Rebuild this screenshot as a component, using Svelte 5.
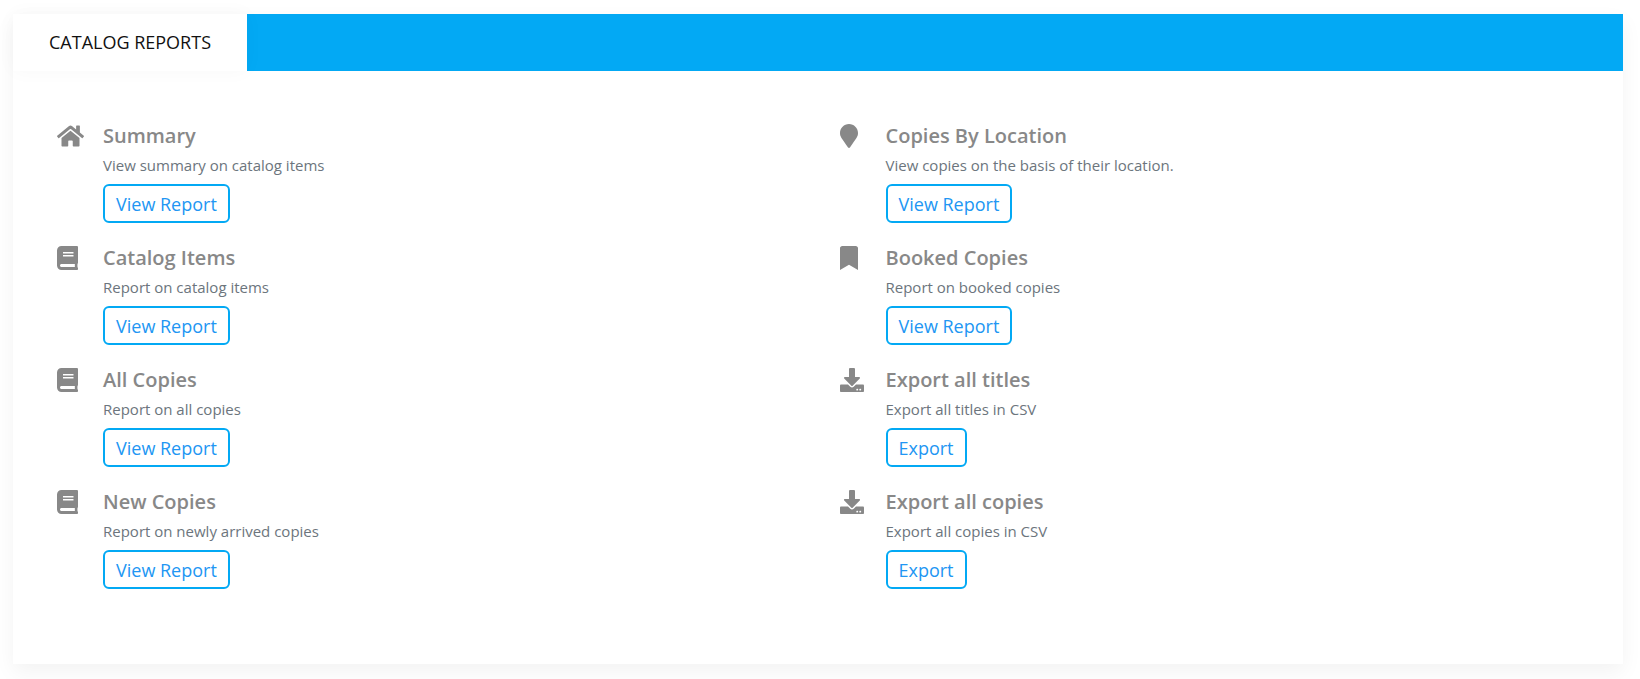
<script>
  const icons = {
    home: { width: 27, box: '0 0 576 512', path: 'M280.37 148.26L96 300.11V464a16 16 0 0 0 16 16l112.06-.29a16 16 0 0 0 15.92-16V368a16 16 0 0 1 16-16h64a16 16 0 0 1 16 16v95.64a16 16 0 0 0 16 16.05L464 480a16 16 0 0 0 16-16V300L295.67 148.26a12.19 12.19 0 0 0-15.3 0zM571.6 251.47L488 182.56V44.05a12 12 0 0 0-12-12h-56a12 12 0 0 0-12 12v72.61L318.47 43a48 48 0 0 0-61 0L4.34 251.47a12 12 0 0 0-1.6 16.9l25.5 31A12 12 0 0 0 45.15 301l235.22-193.74a12.19 12.19 0 0 1 15.3 0L530.9 301a12 12 0 0 0 16.9-1.6l25.5-31a12 12 0 0 0-1.7-16.93z' },
    book: { width: 21, box: '0 0 448 512', path: 'M448 360V24c0-13.3-10.7-24-24-24H96C43 0 0 43 0 96v320c0 53 43 96 96 96h328c13.3 0 24-10.7 24-24v-16c0-7.5-3.5-14.3-8.9-18.7-4.2-15.4-4.2-59.3 0-74.7 5.4-4.3 8.9-11.1 8.9-18.6zM128 134c0-3.3 2.7-6 6-6h212c3.3 0 6 2.7 6 6v20c0 3.3-2.7 6-6 6H134c-3.3 0-6-2.7-6-6v-20zm0 64c0-3.3 2.7-6 6-6h212c3.3 0 6 2.7 6 6v20c0 3.3-2.7 6-6 6H134c-3.3 0-6-2.7-6-6v-20zm253.4 250H96c-17.7 0-32-14.3-32-32 0-17.6 14.4-32 32-32h285.4c-1.9 17.1-1.9 46.9 0 64z' },
    marker: { width: 18, box: '0 0 384 512', path: 'M172.268 501.67C26.97 291.031 0 269.413 0 192 0 85.961 85.961 0 192 0s192 85.961 192 192c0 77.413-26.97 99.031-172.268 309.67-9.535 13.774-29.93 13.773-39.464 0z' },
    bookmark: { width: 18, box: '0 0 384 512', path: 'M0 512V48C0 21.49 21.49 0 48 0h288c26.51 0 48 21.49 48 48v464L192 400 0 512z' },
    download: { width: 24, box: '0 0 512 512', path: 'M216 0h80c13.3 0 24 10.7 24 24v168h87.7c17.8 0 26.7 21.5 14.1 34.1L269.7 378.3c-7.5 7.5-19.8 7.5-27.3 0L90.1 226.1c-12.6-12.6-3.7-34.1 14.1-34.1H192V24c0-13.3 10.7-24 24-24zm296 376v112c0 13.3-10.7 24-24 24H24c-13.3 0-24-10.7-24-24V376c0-13.3 10.7-24 24-24h146.7l49 49c20.1 20.1 52.5 20.1 72.6 0l49-49H488c13.3 0 24 10.7 24 24zm-124 88c0-11-9-20-20-20s-20 9-20 20 9 20 20 20 20-9 20-20zm64 0c0-11-9-20-20-20s-20 9-20 20 9 20 20 20 20-9 20-20z' }
  };

  const columns = [
    [
      { icon: 'home', title: 'Summary', text: 'View summary on catalog items', action: 'View Report' },
      { icon: 'book', title: 'Catalog Items', text: 'Report on catalog items', action: 'View Report' },
      { icon: 'book', title: 'All Copies', text: 'Report on all copies', action: 'View Report' },
      { icon: 'book', title: 'New Copies', text: 'Report on newly arrived copies', action: 'View Report' }
    ],
    [
      { icon: 'marker', title: 'Copies By Location', text: 'View copies on the basis of their location.', action: 'View Report' },
      { icon: 'bookmark', title: 'Booked Copies', text: 'Report on booked copies', action: 'View Report' },
      { icon: 'download', title: 'Export all titles', text: 'Export all titles in CSV', action: 'Export' },
      { icon: 'download', title: 'Export all copies', text: 'Export all copies in CSV', action: 'Export' }
    ]
  ];
</script>

<main class="card">
  <nav class="tabs">
    <button class="tab" type="button">CATALOG REPORTS</button>
  </nav>
  <div class="reports">
    {#each columns as column}
      <div class="column">
        {#each column as report}
          <section class="report">
            <div class="icon">
              <svg width={icons[report.icon].width} height="24" viewBox={icons[report.icon].box} aria-hidden="true">
                <path fill="currentColor" d={icons[report.icon].path} />
              </svg>
            </div>
            <div class="details">
              <h2>{report.title}</h2>
              <p>{report.text}</p>
              <button class="action" type="button">{report.action}</button>
            </div>
          </section>
        {/each}
      </div>
    {/each}
  </div>
</main>

<style>
  :global(body) {
    margin: 0;
    background: #fff;
    font-family: "Open Sans", sans-serif;
  }
  .card {
    margin: 14px 17px 15px 13px;
    background: #fff;
    box-shadow: 0 8px 20px rgba(0, 0, 0, 0.05);
  }
  .tabs {
    display: flex;
    background: #03a9f4;
  }
  .tab {
    height: 57px;
    padding: 0 36px 2px;
    border: 0;
    background: #fff;
    color: #111;
    font: 400 18px/24px "Open Sans", sans-serif;
    box-shadow: 0 0 20px rgba(0, 0, 0, 0.03);
  }
  .reports {
    display: grid;
    grid-template-columns: 1fr 1fr;
    padding: 51px 23px 54px 22px;
  }
  .column {
    padding-left: 22px;
  }
  .report {
    display: flex;
    height: 122px;
  }
  .icon {
    width: 46px;
    padding-top: 2px;
    color: #888;
  }
  .icon svg {
    display: block;
  }
  h2 {
    margin: 0;
    color: #888;
    font-size: 20px;
    font-weight: 600;
    line-height: 28px;
  }
  p {
    margin: 4px 0 7px;
    color: #6c757d;
    font-size: 15px;
    line-height: 23px;
  }
  .action {
    height: 39px;
    padding: 0 11px;
    border: 2px solid #03a9f4;
    border-radius: 6px;
    background: #fff;
    color: #2196f3;
    font: 400 18px/24px "Open Sans", sans-serif;
  }
</style>
